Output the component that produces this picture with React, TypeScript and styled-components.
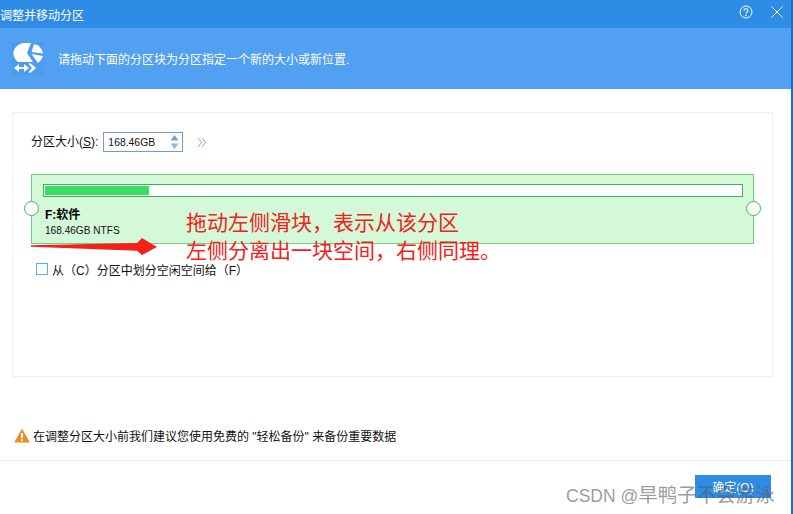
import React from "react";
import styled, { createGlobalStyle } from "styled-components";

const Global = createGlobalStyle`
  html, body { margin: 0; padding: 0; background: #fff; }
  body { font-family: "Liberation Sans", "Noto Sans CJK SC", sans-serif; }
`;

const Win = styled.div`
  position: relative;
  width: 793px;
  height: 514px;
  box-sizing: border-box;
  border-right: 2px solid #1a70c0;
  overflow: hidden;
  display: flex;
  flex-direction: column;
  background: #fff;
  color: #111;
`;
const TitleBar = styled.div`
  height: 28px;
  flex: none;
  background: #2e8ce6;
  color: #fff;
  display: flex;
  align-items: center;
  font-size: 12px;
  padding-right: 8px;
`;
const Title = styled.div`
  flex: 1;
`;
const TitleIcons = styled.div`
  display: flex;
  align-items: center;
  gap: 18px;
  margin-top: -4px;
`;
const Banner = styled.div`
  height: 61px;
  flex: none;
  background: #52a0f2;
  color: #fff;
  display: flex;
  align-items: center;
  padding-left: 12px;
  gap: 14px;
  font-size: 12px;
`;
const Body = styled.div`
  flex: 1;
  padding: 23px 18px 0 12px;
  display: flex;
  flex-direction: column;
`;
const Panel = styled.div`
  height: 265px;
  flex: none;
  box-sizing: border-box;
  border: 1px solid #eef0f3;
  padding: 19px 18px 0 18px;
`;
const SizeRow = styled.div`
  display: flex;
  align-items: center;
  height: 20px;
  font-size: 12px;
  gap: 5px;
`;
const SizeLabel = styled.span`
  margin-top: -3px;
`;
const SizeBox = styled.div`
  width: 80px;
  height: 20px;
  box-sizing: border-box;
  border: 1px solid #6f9bd6;
  display: flex;
  align-items: center;
  justify-content: space-between;
  padding: 0 3px 0 4px;
  font-size: 10.4px;
  margin-right: 9px;
`;
const PartitionBlock = styled.div`
  position: relative;
  margin-top: 22px;
  width: 723px;
  height: 70px;
  box-sizing: border-box;
  border: 1px solid #6fd07f;
  background: #d4f9d8;
  padding: 9px 10px 0 11px;
`;
const Bar = styled.div`
  height: 13px;
  box-sizing: border-box;
  border: 1px solid #35b558;
  background: #fff;
  padding: 1px;
`;
const BarFill = styled.div`
  height: 100%;
  background: #38de63;
`;
const PartName = styled.div`
  font-size: 12px;
  font-weight: bold;
  margin: 11px 0 0 2px;
  line-height: 15px;
  color: #000;
`;
const PartInfo = styled.div`
  font-size: 10.1px;
  line-height: 14px;
  margin: 1px 0 0 2px;
`;
const Handle = styled.div<{ $side: "left" | "right" }>`
  position: absolute;
  top: 26px;
  ${(p) => p.$side}: -8px;
  width: 15px;
  height: 15px;
  box-sizing: border-box;
  border-radius: 50%;
  border: 1px solid #3dbb5a;
  background: #fff;
`;
const CheckRow = styled.div`
  display: flex;
  align-items: center;
  gap: 4px;
  margin: 18px 0 0 5px;
  height: 14px;
  font-size: 12px;
`;
const Box = styled.div`
  width: 12px;
  height: 12px;
  box-sizing: border-box;
  border: 1px solid #4ab5f0;
  background: #fff;
`;
const Warn = styled.div`
  margin-top: 50px;
  height: 16px;
  display: flex;
  align-items: center;
  gap: 3px;
  margin-left: 2px;
  font-size: 12px;
`;
const Footer = styled.div`
  flex: none;
  box-sizing: border-box;
  height: 54px;
  border-top: 1px solid #e9ecf2;
  display: flex;
  justify-content: flex-end;
  padding: 14px 20px 0 0;
`;
const OkButton = styled.div`
  width: 76px;
  height: 23px;
  background: #2e8ce6;
  color: #fff;
  font-size: 12px;
  display: flex;
  align-items: center;
  justify-content: center;
`;
const Note = styled.div`
  position: absolute;
  left: 186px;
  top: 209px;
  color: #f5201a;
  font-size: 21px;
  line-height: 28px;
  white-space: nowrap;
`;
const Arrow = styled.svg`
  position: absolute;
  left: 30px;
  top: 236px;
`;
const Watermark = styled.div`
  position: absolute;
  left: 566px;
  top: 484px;
  font-size: 17.5px;
  line-height: 22px;
  color: rgba(90, 90, 90, 0.62);
  white-space: nowrap;
`;
const WatermarkName = styled.span`
  font-size: 19.5px;
`;

const HelpIcon = () => (
  <svg width="14" height="14" viewBox="0 0 14 14" fill="none" stroke="#fff">
    <circle cx="7" cy="7" r="6" strokeWidth="1" />
    <path d="M5 5.6c0-1.2.9-1.9 2-1.9s2 .7 2 1.7c0 1.5-2 1.5-2 3" strokeWidth="1.1" />
    <circle cx="7" cy="10.4" r=".8" fill="#fff" stroke="none" />
  </svg>
);
const CloseIcon = () => (
  <svg width="12" height="12" viewBox="0 0 12 12" stroke="#fff" strokeWidth="1">
    <path d="M.5.5l11 11M11.5.5l-11 11" />
  </svg>
);
const Logo = () => (
  <svg width="32" height="32" viewBox="0 0 32 32">
    <rect width="32" height="32" fill="#4c9bf0" />
    <path d="M19 .3A13 11 0 0 0 6 19H21L15 10Z" fill="#fff" />
    <path d="M22 1A12 11 0 0 1 31 10.5L19.5 9Z" fill="#fff" />
    <path d="M19.5 11L31 13A13 13 0 0 1 26 20Z" fill="#fff" />
    <path d="M19 20.5L24 25L19 29.5H16L20 25L16 20.5Z" fill="#fff" />
    <path d="M2 25L7 21V24H12V21L17 25L12 29V26H7V29Z" fill="#fff" />
  </svg>
);
const Spin = () => (
  <svg width="9" height="16" viewBox="0 0 9 16">
    <path d="M4.5 1L8.5 6.5H.5z" fill="#7f9dc8" />
    <path d="M4.5 15L.5 9.5h8z" fill="#98b2d8" />
  </svg>
);
const Chevrons = () => (
  <svg width="10" height="11" viewBox="0 0 10 11" fill="none" stroke="#a6bcdc" strokeWidth="1.1">
    <path d="M1 1l3.5 4.5L1 10M5 1l3.5 4.5L5 10" />
  </svg>
);
const WarnIcon = () => (
  <svg width="16" height="15" viewBox="0 0 16 15">
    <path d="M8 .5L15.8 14.5H.2z" fill="#f08a24" />
    <rect x="7" y="5" width="2" height="5" fill="#fff" />
    <rect x="7" y="11" width="2" height="2" fill="#fff" />
  </svg>
);

export default function App() {
  return (
    <>
      <Global />
      <Win>
        <TitleBar>
          <Title>调整并移动分区</Title>
          <TitleIcons>
            <HelpIcon />
            <CloseIcon />
          </TitleIcons>
        </TitleBar>
        <Banner>
          <Logo />
          <span>请拖动下面的分区块为分区指定一个新的大小或新位置.</span>
        </Banner>
        <Body>
          <Panel>
            <SizeRow>
              <SizeLabel>
                分区大小(<u>S</u>):
              </SizeLabel>
              <SizeBox>
                <span>168.46GB</span>
                <Spin />
              </SizeBox>
              <Chevrons />
            </SizeRow>
            <PartitionBlock>
              <Bar>
                <BarFill style={{ width: `${(104 / 697) * 100}%` }} />
              </Bar>
              <PartName>F:软件</PartName>
              <PartInfo>168.46GB NTFS</PartInfo>
              <Handle $side="left" />
              <Handle $side="right" />
            </PartitionBlock>
            <CheckRow>
              <Box />
              <span>从（C）分区中划分空闲空间给（F）</span>
            </CheckRow>
          </Panel>
          <Warn>
            <WarnIcon />
            <span>在调整分区大小前我们建议您使用免费的 "轻松备份" 来备份重要数据</span>
          </Warn>
        </Body>
        <Footer>
          <OkButton>确定(O)</OkButton>
        </Footer>
        <Note>
          拖动左侧滑块，表示从该分区
          <br />
          左侧分离出一块空间，右侧同理。
        </Note>
        <Arrow width="130" height="22" viewBox="0 0 130 22">
          <path d="M1 9.3L107 7 112 2 127 11 112 19 107 14.7 1 10.8z" fill="#f5201a" />
        </Arrow>
        <Watermark>
          CSDN @<WatermarkName>旱鸭子不会游泳</WatermarkName>
        </Watermark>
      </Win>
    </>
  );
}
